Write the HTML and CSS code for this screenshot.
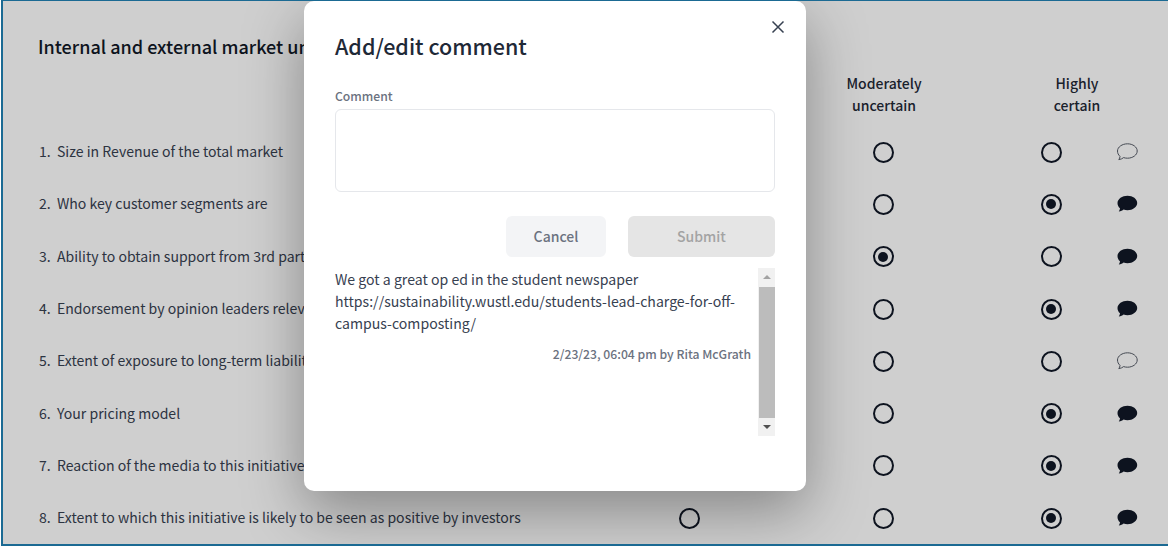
FILE: index.html
```html
<!DOCTYPE html>
<html lang="en">
<head>
<meta charset="utf-8">
<title>Add/edit comment</title>
<link rel="stylesheet" href="styles.css">
</head>
<body>
<svg class="defs" width="0" height="0" aria-hidden="true">
  <symbol id="bubble" viewBox="0 0 22 18">
    <path d="M11.500 .8c5.300 0 9.700 3.200 9.700 7.200s-4.400 7.200-9.700 7.200c-1.400 0-2.700-.2-3.900-.6-1.200 1-2.700 1.700-4.800 2 .7-.9 1.100-2 1.200-3.300C2.300 11.900 1.500 10 1.500 8c0-4 4.700-7.200 10-7.200z"/>
  </symbol>
</svg>
<main class="card">
  <h2 class="card-title">Internal and external market uncertainties</h2>
  <div class="grid">
    <div class="head head-mod">Moderately<br>uncertain</div>
    <div class="head head-high">Highly<br>certain</div>

    <div class="label"><span class="num">1.</span>Size in Revenue of the total market</div>
    <span class="radio"></span><span class="radio"></span><span class="radio"></span>
    <svg class="bubble outline"><use href="#bubble"/></svg>

    <div class="label"><span class="num">2.</span>Who key customer segments are</div>
    <span class="radio"></span><span class="radio"></span><span class="radio on"></span>
    <svg class="bubble"><use href="#bubble"/></svg>

    <div class="label"><span class="num">3.</span>Ability to obtain support from 3rd parties</div>
    <span class="radio"></span><span class="radio on"></span><span class="radio"></span>
    <svg class="bubble"><use href="#bubble"/></svg>

    <div class="label"><span class="num">4.</span>Endorsement by opinion leaders relevant to this initiative</div>
    <span class="radio"></span><span class="radio"></span><span class="radio on"></span>
    <svg class="bubble"><use href="#bubble"/></svg>

    <div class="label"><span class="num">5.</span>Extent of exposure to long-term liabilities</div>
    <span class="radio"></span><span class="radio"></span><span class="radio"></span>
    <svg class="bubble outline"><use href="#bubble"/></svg>

    <div class="label"><span class="num">6.</span>Your pricing model</div>
    <span class="radio"></span><span class="radio"></span><span class="radio on"></span>
    <svg class="bubble"><use href="#bubble"/></svg>

    <div class="label"><span class="num">7.</span>Reaction of the media to this initiative</div>
    <span class="radio"></span><span class="radio"></span><span class="radio on"></span>
    <svg class="bubble"><use href="#bubble"/></svg>

    <div class="label"><span class="num">8.</span>Extent to which this initiative is likely to be seen as positive by investors</div>
    <span class="radio"></span><span class="radio"></span><span class="radio on"></span>
    <svg class="bubble"><use href="#bubble"/></svg>
  </div>

  <div class="overlay">
    <section class="modal">
      <svg class="close" viewBox="0 0 14 14"><path d="M1.500 1.500l11 11M12.500 1.500l-11 11"/></svg>
      <h1 class="modal-title">Add/edit comment</h1>
      <div class="field-label">Comment</div>
      <div class="textarea"></div>
      <div class="actions">
        <button class="btn cancel">Cancel</button>
        <button class="btn submit">Submit</button>
      </div>
      <div class="comments">
        <div class="comment">
          <p class="comment-text">We got a great op ed in the student newspaper https://sustainability.wustl.edu/students-lead-charge-for-off-campus-composting/</p>
          <p class="comment-meta">2/23/23, 06:04 pm by Rita McGrath</p>
        </div>
        <div class="scrollbar">
          <span class="arrow up"></span>
          <span class="thumb"></span>
          <span class="arrow down"></span>
        </div>
      </div>
    </section>
  </div>
</main>
</body>
</html>
```

FILE: styles.css
```css
* { box-sizing: border-box; }
html, body { margin: 0; height: 100%; }
body {
  font-family: "Noto Sans CJK SC", "Noto Sans", sans-serif;
  color: #1f2937;
  overflow: hidden;
  background: #fff;
  padding-left: 1px;
}
.defs { position: absolute; }
.card {
  position: relative;
  height: 546px;
  background: #fff;
  border: solid #1b6a93;
  border-width: 1px 0 2px 2px;
  padding: 34px 0 0 35px;
  overflow: hidden;
}
.card-title {
  margin: 0;
  font-size: 18px;
  line-height: 22px;
  font-weight: 500;
  color: #111827;
}
.grid {
  display: grid;
  grid-template-columns: 582px 138px 250px 86px 66px;
  grid-template-rows: 69px repeat(8, 52.3px);
  align-items: center;
  justify-items: center;
}
.head {
  font-size: 14px;
  line-height: 21.500px;
  font-weight: 500;
  text-align: center;
  align-self: start;
  padding-top: 16px;
  color: #1f2937;
}
.head-mod { grid-column: 3; padding-left: 2px; }
.head-high { grid-column: 4 / span 2; padding-right: 14px; }
.label {
  justify-self: start;
  display: flex;
  font-size: 14.050px;
  line-height: 22px;
  padding-bottom: 2px;
  white-space: nowrap;
  color: #374151;
}
.num { width: 18px; margin-left: 1px; }
.radio {
  width: 21px;
  height: 21px;
  border: 2px solid #111827;
  border-radius: 50%;
  display: flex;
  align-items: center;
  justify-content: center;
}
.radio.on::after {
  content: "";
  width: 10px;
  height: 10px;
  border-radius: 50%;
  background: #111827;
}
.bubble { width: 22px; height: 18px; fill: #111827; }
.bubble.outline { fill: none; stroke: #555b66; stroke-width: 1; }

.overlay {
  position: absolute;
  inset: 0;
  background: rgba(0, 0, 0, 0.19);
}
.modal {
  position: absolute;
  left: 301px;
  top: 0;
  width: 502px;
  height: 490px;
  background: #fff;
  border-radius: 10px;
  padding: 29px 31px 0;
  box-shadow: 0 20px 60px 0 rgba(0, 0, 0, 0.35);
}
.close {
  position: absolute;
  top: 19px;
  right: 21px;
  width: 14px;
  height: 14px;
  fill: none;
  stroke: #374151;
  stroke-width: 1.500;
}
.modal-title {
  margin: 0;
  font-size: 21.500px;
  line-height: 32px;
  font-weight: 500;
  color: #1f2937;
}
.field-label {
  margin-top: 24px;
  font-size: 12.200px;
  line-height: 20px;
  font-weight: 500;
  color: #6b7280;
}
.textarea {
  margin-top: 3px;
  height: 83px;
  border: 1px solid #e5e7eb;
  border-radius: 6px;
}
.actions {
  display: flex;
  justify-content: flex-end;
  gap: 22px;
  margin-top: 24px;
}
.btn {
  height: 41px;
  border: 0;
  border-radius: 6px;
  padding: 0 0 2px;
  font: 500 14px "Noto Sans CJK SC", "Noto Sans", sans-serif;
}
.cancel { width: 100px; background: #f3f4f6; color: #6b7280; }
.submit { width: 147px; background: #e5e5e5; color: #a3a3a3; }
.comments {
  display: flex;
  justify-content: space-between;
  height: 168px;
  margin-top: 11px;
}
.comment { width: 416px; }
.comment-text {
  margin: 0;
  font-size: 14.100px;
  line-height: 22px;
  color: #374151;
}
.comment-meta {
  margin: 10px 0 0;
  font-size: 12.200px;
  line-height: 20px;
  font-weight: 500;
  text-align: right;
  color: #6b7280;
}
.scrollbar {
  width: 17px;
  background: #f1f1f1;
  display: flex;
  flex-direction: column;
  align-items: center;
}
.arrow {
  width: 0;
  height: 4px;
  flex: 0 0 4px;
  border-left: 4px solid transparent;
  border-right: 4px solid transparent;
}
.arrow.up { border-bottom: 4px solid #a3a3a3; margin: 7px 0 8px; }
.arrow.down { border-top: 4px solid #505050; margin-top: 7px; }
.thumb { width: 16px; height: 131px; flex: none; background: #bcbcbc; }
```
